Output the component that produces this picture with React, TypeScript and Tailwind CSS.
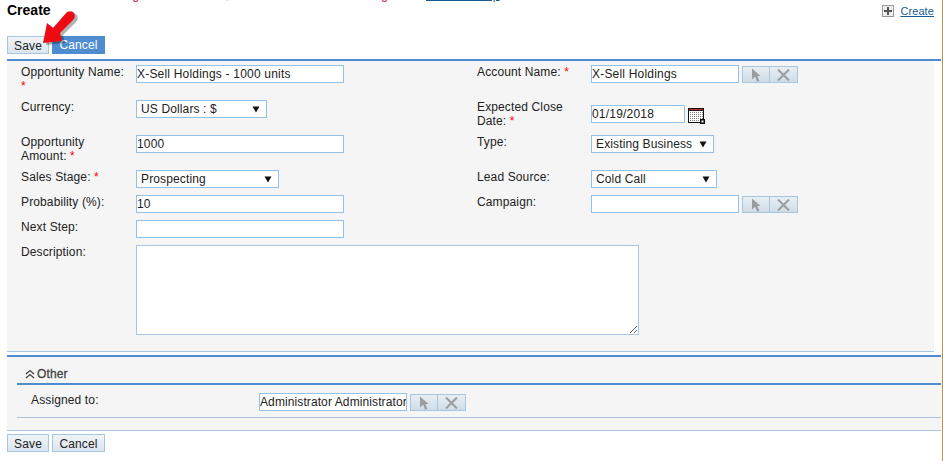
import type { ReactNode } from 'react';

const inputCls =
  'h-[18px] border border-[#94c1e8] bg-white px-0 text-[12px] tracking-[0.2px] text-[#222] outline-none font-["Liberation_Sans",Arial,sans-serif]';

function Req() {
  return <span className="text-[#ff0000]"> *</span>;
}

function Select({ value, width }: { value: string; width: string }) {
  return (
    <div className={`flex h-[18px] items-center justify-between border border-[#94c1e8] bg-white pl-[4px] pr-[6px] text-[12px] tracking-[0.13px] text-[#222] ${width}`}>
      <span>{value}</span>
      <svg width="8" height="7" viewBox="0 0 8 7">
        <path d="M0.5 0.5H7.5L4 6.5Z" fill="#111" />
      </svg>
    </div>
  );
}

function PickerButtons() {
  return (
    <div className="ml-[3px] mt-[1px] flex">
      <button className="flex h-[17px] w-[28px] items-center justify-center border border-[#a9c6e0] bg-gradient-to-b from-[#e8eef3] to-[#cfdde8]">
        <svg width="10" height="14" viewBox="0 0 10 14">
          <path d="M1 0.5L9.5 8H6.4L8.4 13L6 13.5L4.2 8.8L1 11.5Z" fill="#989da1" />
        </svg>
      </button>
      <button className="flex h-[17px] w-[28px] items-center justify-center border border-l-0 border-[#a9c6e0] bg-gradient-to-b from-[#e8eef3] to-[#cfdde8]">
        <svg width="13" height="12" viewBox="0 0 13 12">
          <path d="M1 0.5L12 11.5M12 0.5L1 11.5" stroke="#989da1" strokeWidth="2" />
        </svg>
      </button>
    </div>
  );
}

function CalendarIcon() {
  return (
    <svg className="ml-[3px] mt-[8px]" width="17" height="16" viewBox="0 0 17 16">
      <rect x="0.5" y="0.5" width="15" height="14" fill="#fff" stroke="#111" />
      <rect x="1" y="1" width="14" height="1" fill="#c8202a" />
      <rect x="1" y="2" width="14" height="1" fill="#222" />
      <path d="M2 4.5H15M2 6.5H15M2 8.5H15M2 10.5H15M2 12.5H15" stroke="#7a7a7a" strokeDasharray="1 1" />
      <rect x="12" y="11" width="5" height="5" fill="#111" />
      <rect x="13.5" y="12.5" width="2" height="2" fill="#fff" />
    </svg>
  );
}

function Label({ children }: { children: ReactNode }) {
  return <div className="pr-[6px] leading-[14px] text-[#222]">{children}</div>;
}

function ActionButton({ children, primary }: { children: ReactNode; primary?: boolean }) {
  return (
    <button
      className={
        primary
          ? 'h-[18px] w-[53px] bg-[#4e8ccf] text-[12px] text-white'
          : 'h-[18px] w-full border border-[#a9c6e0] bg-gradient-to-b from-[#f0f4f7] to-[#dbe5ee] text-[12px] text-[#222]'
      }
    >
      {children}
    </button>
  );
}

function SaveArrow() {
  return (
    <svg className="absolute left-[38px] top-[8px]" width="44" height="44" viewBox="38 8 44 44">
      <path d="M46 45L50 25L56 30L70 14Q75 12 77 15Q79 19 76 22L63 35L65 43Z" fill="#000" opacity="0.3" />
      <path d="M43 43L47 23L53 28L67 12Q72 10 74 13Q76 17 73 20L60 33L62 41Z" fill="#ee0a12" />
    </svg>
  );
}

export default function App() {
  return (
    <div className='relative h-[461px] w-[943px] overflow-hidden bg-white font-["Liberation_Sans",Arial,sans-serif] text-[12px] tracking-[0.13px]'>
      <div className="absolute inset-y-0 right-0 w-[1px] bg-[#b2954c]" />
      <SaveArrow />

      {/* cut off help line at the very top */}
      <div className="h-[3px] overflow-hidden pl-[103px]">
        <div className="-mt-[12px] flex h-[15px] text-[12px] leading-[15px]">
          <span className="w-[323px] text-[#d5003c]">Changes will be saved, click Save to reset the listing</span>
          <span className="text-[#1c5a96] underline">View the help</span>
        </div>
      </div>

      <div className="flex h-[33px] items-start justify-between pl-[7px] pr-[9px]">
        <h2 className="text-[14px] font-bold leading-[15px] tracking-normal text-black">Create</h2>
        <div className="flex items-center gap-[6px]">
          <span className="flex h-[12px] w-[12px] items-center justify-center border border-[#999] bg-[#eee]">
            <svg width="8" height="8" viewBox="0 0 8 8">
              <path d="M4 0V8M0 4H8" stroke="#555" strokeWidth="2" />
            </svg>
          </span>
          <a className="text-[11px] tracking-[0.1px] text-[#1c5a96] underline">Create</a>
        </div>
      </div>

      <div className="flex gap-[3px] pl-[7px]">
        <div className="w-[42px]">
          <ActionButton>Save</ActionButton>
        </div>
        <ActionButton primary>Cancel</ActionButton>
      </div>

      <div className="ml-[7px] mt-[4px] h-[2px] w-[934px] bg-[#4e8ccf]" />

      {/* main panel */}
      <div className="ml-[7px] h-[291px] w-[927px] border-b border-[#a9c6e0] bg-[#f5f5f5] pl-[14px] pt-[4px]">
        <div className="grid grid-cols-[115px_341px_114px_1fr] grid-rows-[35px_35px_35px_25px_25px_25px]">
          <Label>
            Opportunity Name:
            <br />
            <span className="text-[#ff0000]">*</span>
          </Label>
          <input className={`${inputCls} w-[208px]`} defaultValue="X-Sell Holdings - 1000 units" />
          <Label>
            Account Name:
            <Req />
          </Label>
          <div className="flex items-start">
            <input className={`${inputCls} w-[148px]`} defaultValue="X-Sell Holdings" />
            <PickerButtons />
          </div>

          <Label>Currency:</Label>
          <Select value="US Dollars : $" width="w-[131px]" />
          <Label>
            Expected Close
            <br />
            Date:
            <Req />
          </Label>
          <div className="flex items-start">
            <input className={`${inputCls} mt-[5px] w-[94px]`} defaultValue="01/19/2018" />
            <CalendarIcon />
          </div>

          <Label>
            Opportunity
            <br />
            Amount:
            <Req />
          </Label>
          <input className={`${inputCls} w-[208px]`} defaultValue="1000" />
          <Label>Type:</Label>
          <Select value="Existing Business" width="w-[123px]" />

          <Label>
            Sales Stage:
            <Req />
          </Label>
          <Select value="Prospecting" width="w-[143px]" />
          <Label>Lead Source:</Label>
          <Select value="Cold Call" width="w-[126px]" />

          <Label>Probability (%):</Label>
          <input className={`${inputCls} w-[208px]`} defaultValue="10" />
          <Label>Campaign:</Label>
          <div className="flex items-start">
            <input className={`${inputCls} w-[148px]`} />
            <PickerButtons />
          </div>

          <Label>Next Step:</Label>
          <input className={`${inputCls} w-[208px]`} />
          <div />
          <div />
        </div>

        <div className="flex">
          <div className="w-[115px]">
            <Label>Description:</Label>
          </div>
          <textarea className="h-[90px] w-[503px] border border-[#a9c6e0] bg-white outline-none" />
        </div>
      </div>

      {/* other section */}
      <div className="ml-[7px] mt-[3px] h-[76px] w-[934px] border-t-2 border-[#4e8ccf] bg-[#f5f5f5] pl-[10px] pt-[8px]">
        <div className="flex h-[17px] items-center gap-[2px] pl-[8px] text-[12px] text-[#444]">
          <svg width="10" height="10" viewBox="0 0 10 10" fill="none" stroke="#444" strokeWidth="1.3">
            <path d="M1 5L5 1.5L9 5M1 9L5 5.5L9 9" />
          </svg>
          <span className="[-webkit-text-stroke:0.3px_#444]">Other</span>
        </div>
        <div className="mt-[1px] h-[2px] bg-[#4e8ccf]" />
        <div className="flex h-[33px] items-start border-b border-[#a9c6e0] pl-[14px] pt-[8px]">
          <div className="w-[228px] leading-[14px] text-[#222]">Assigned to:</div>
          <input className={`${inputCls} h-[17px] w-[148px] !tracking-[0.1px]`} defaultValue="Administrator Administrator" />
          <PickerButtons />
        </div>
      </div>

      <div className="ml-[7px] mt-[-1px] h-[1px] w-[934px] bg-[#a9c6e0]" />

      <div className="mt-[3px] flex gap-[3px] pl-[7px]">
        <div className="w-[42px]">
          <ActionButton>Save</ActionButton>
        </div>
        <div className="w-[53px]">
          <ActionButton>Cancel</ActionButton>
        </div>
      </div>
    </div>
  );
}
